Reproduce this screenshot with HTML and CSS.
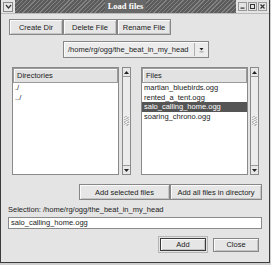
FILE: index.html
```html
<!DOCTYPE html>
<html>
<head>
<meta charset="utf-8">
<link rel="stylesheet" href="styles.css">
</head>
<body>
<div class="window">
  <div class="titlebar">
    <div class="tb-icon"><svg width="7" height="7" viewBox="0 0 7 7"><path d="M1 2 L3.5 5 L6 2" fill="none" stroke="#333" stroke-width="1.2"/></svg></div>
    <div class="tb-fill"></div>
    <div class="tb-title">Load files</div>
    <div class="tb-fill"></div>
    <div class="tb-btns">
      <div class="tb-btn"><svg width="7" height="7" viewBox="0 0 7 7"><rect x="1.5" y="4.5" width="4" height="1.2" fill="#333"/></svg></div>
      <div class="tb-btn"><svg width="7" height="7" viewBox="0 0 7 7"><rect x="1.5" y="1.5" width="4" height="4" fill="none" stroke="#333" stroke-width="1"/></svg></div>
      <div class="tb-btn"><svg width="7" height="7" viewBox="0 0 7 7"><path d="M1.5 1.5 L5.5 5.5 M5.5 1.5 L1.5 5.5" stroke="#333" stroke-width="1.2"/></svg></div>
    </div>
  </div>
  <div class="body">
    <div class="toolbar">
      <div class="btn tool">Create Dir</div>
      <div class="btn tool">Delete File</div>
      <div class="btn tool">Rename File</div>
    </div>
    <div class="combo-row">
      <div class="combo">
        <span class="combo-text">/home/rg/ogg/the_beat_in_my_head</span>
        <span class="combo-arrow"><svg width="7" height="7" viewBox="0 0 7 7"><path d="M1.5 2 L5.5 2 L3.5 4.5 Z" fill="#222"/><rect x="1.5" y="5.5" width="4" height="0.8" fill="#888"/></svg></span>
      </div>
    </div>
    <div class="lists">
      <div class="list">
        <div class="list-head">Directories</div>
        <div class="list-body">
          <div class="row">./</div>
          <div class="row">../</div>
        </div>
      </div>
      <div class="scroll">
        <div class="sb-btn"><svg width="7" height="7" viewBox="0 0 7 7"><path d="M1 5 L6 5 L3.5 2 Z" fill="#222"/></svg></div>
        <div class="sb-track"><div class="grip"></div></div>
        <div class="sb-btn"><svg width="7" height="7" viewBox="0 0 7 7"><path d="M1 2 L6 2 L3.5 5 Z" fill="#222"/></svg></div>
      </div>
      <div class="list files">
        <div class="list-head">Files</div>
        <div class="list-body">
          <div class="row">martian_bluebirds.ogg</div>
          <div class="row">rented_a_tent.ogg</div>
          <div class="row sel">salo_calling_home.ogg</div>
          <div class="row">soaring_chrono.ogg</div>
        </div>
      </div>
      <div class="scroll scroll2">
        <div class="sb-btn"><svg width="7" height="7" viewBox="0 0 7 7"><path d="M1 5 L6 5 L3.5 2 Z" fill="#222"/></svg></div>
        <div class="sb-track"><div class="grip"></div></div>
        <div class="sb-btn"><svg width="7" height="7" viewBox="0 0 7 7"><path d="M1 2 L6 2 L3.5 5 Z" fill="#222"/></svg></div>
      </div>
    </div>
    <div class="add-row">
      <div class="btn add1">Add selected files</div>
      <div class="btn add2">Add all files in directory</div>
    </div>
    <div class="sel-label">Selection: /home/rg/ogg/the_beat_in_my_head</div>
    <div class="sel-input">salo_calling_home.ogg</div>
    <div class="dialog-btns">
      <div class="default-ring"><div class="btn btn-add">Add</div></div>
      <div class="btn btn-close">Close</div>
    </div>
  </div>
</div>
</body>
</html>
```
FILE: styles.css
```css
* { box-sizing: border-box; }
body {
  margin: 0;
  background: #cfcfcf;
  font-family: "Liberation Sans", Arial, sans-serif;
  font-size: 7.5px;
  color: #222;
}
.window {
  width: 270px;
  height: 263px;
  background: #e4e4e4;
  border: 1px solid #3c3c3c;
  border-top: none;
  display: flex;
  flex-direction: column;
}
.titlebar {
  height: 14px;
  display: flex;
  align-items: center;
  padding: 0 2px 0 2px;
  background: #e4e4e4;
  border-bottom: 1px solid #bbb;
}
.tb-icon {
  width: 10px;
  height: 10px;
  background: #e8e8e8;
  border: 1px solid #888;
  display: flex;
  align-items: center;
  justify-content: center;
  margin-right: 2px;
}
.tb-fill {
  flex: 1;
  height: 13px;
  background: repeating-linear-gradient(135deg, #5c5c5c 0 2px, #828282 2px 3px);
}
.tb-title {
  height: 13px;
  line-height: 13px;
  background: #686868;
  color: #fff;
  font-family: "Liberation Serif", "Times New Roman", serif;
  font-weight: bold;
  font-size: 8.5px;
  padding: 0 3px;
}
.tb-btns {
  display: flex;
  gap: 1px;
  margin-left: 2px;
}
.tb-btn {
  width: 9px;
  height: 9px;
  background: #e4e4e4;
  border: 1px solid #999;
  display: flex;
  align-items: center;
  justify-content: center;
}
.tb-btn svg, .tb-icon svg { display: block; }
.body {
  flex: 1;
  display: flex;
  flex-direction: column;
  padding: 5px 7px 0 8px;
}
.btn {
  background: #e6e6e6;
  border: 1px solid #878787;
  box-shadow: inset 1px 1px #fbfbfb, inset -1px -1px #c4c4c4;
  display: flex;
  align-items: center;
  justify-content: center;
  white-space: nowrap;
  color: #222;
}
.toolbar {
  display: flex;
  height: 16px;
}
.tool { width: 54px; height: 16px; }
.combo-row {
  margin-top: 6px;
  display: flex;
  justify-content: center;
  padding-left: 1px;
}
.combo {
  width: 146px;
  height: 17px;
  border: 1px solid #878787;
  background: #ececec;
  box-shadow: inset 1px 1px #fbfbfb;
  display: flex;
  align-items: center;
}
.combo-text {
  flex: 1;
  padding-left: 4px;
  white-space: nowrap;
}
.combo-arrow {
  width: 14px;
  height: 13px;
  border-left: 1px solid #b0b0b0;
  display: flex;
  align-items: center;
  justify-content: center;
}
.lists {
  margin-top: 9px;
  height: 108px;
  display: flex;
  padding-left: 3px;
}
.list {
  width: 107px;
  height: 108px;
  border: 1px solid #8a8a8a;
  background: #fff;
  display: flex;
  flex-direction: column;
}
.files { margin-left: 10px; }
.list-head {
  height: 15px;
  background: #e2e2e2;
  border: 1px solid #9a9a9a;
  box-shadow: inset 1px 1px #fafafa;
  padding-left: 3px;
  display: flex;
  align-items: center;
}
.list-body {
  flex: 1;
  padding-top: 0;
}
.row {
  height: 9.5px;
  line-height: 9.5px;
  padding-left: 2px;
  white-space: nowrap;
}
.sel {
  background: #555;
  color: #fff;
}
.scroll {
  width: 9px;
  height: 108px;
  margin-left: 3px;
  border: 1px solid #8a8a8a;
  background: #dedede;
  display: flex;
  flex-direction: column;
}
.scroll2 { margin-left: 2px; }
.sb-btn {
  height: 9px;
  background: #e8e8e8;
  border-bottom: 1px solid #999;
  display: flex;
  align-items: center;
  justify-content: center;
}
.sb-btn:last-child {
  border-bottom: none;
  border-top: 1px solid #999;
}
.sb-btn svg { display: block; }
.sb-track {
  flex: 1;
  background: #ececec;
  display: flex;
  align-items: center;
  justify-content: center;
}
.grip {
  width: 5px;
  height: 10px;
  background: repeating-linear-gradient(150deg, transparent 0 1px, #b8b8b8 1px 2px);
}
.add-row {
  margin-top: 9px;
  display: flex;
  justify-content: flex-end;
  height: 16px;
}
.add1 { width: 91px; height: 16px; }
.add2 { width: 92px; height: 16px; }
.sel-label {
  margin-top: 4px;
  height: 11px;
  line-height: 11px;
  margin-left: -1px;
  white-space: nowrap;
}
.sel-input {
  margin-top: 2px;
  margin-left: -1px;
  height: 12px;
  line-height: 10px;
  background: #fff;
  border: 1px solid #8a8a8a;
  padding-left: 2px;
}
.dialog-btns {
  margin-top: 7px;
  display: flex;
  justify-content: flex-end;
  align-items: center;
  padding-right: 3px;
  gap: 5px;
}
.default-ring {
  width: 50px;
  height: 17px;
  border: 1px solid #b5b5b5;
  padding: 1px;
  background: #e4e4e4;
}
.btn-add {
  width: 100%;
  height: 100%;
  border: 1px solid #3a3a3a;
}
.btn-close {
  width: 46px;
  height: 14px;
}
```
